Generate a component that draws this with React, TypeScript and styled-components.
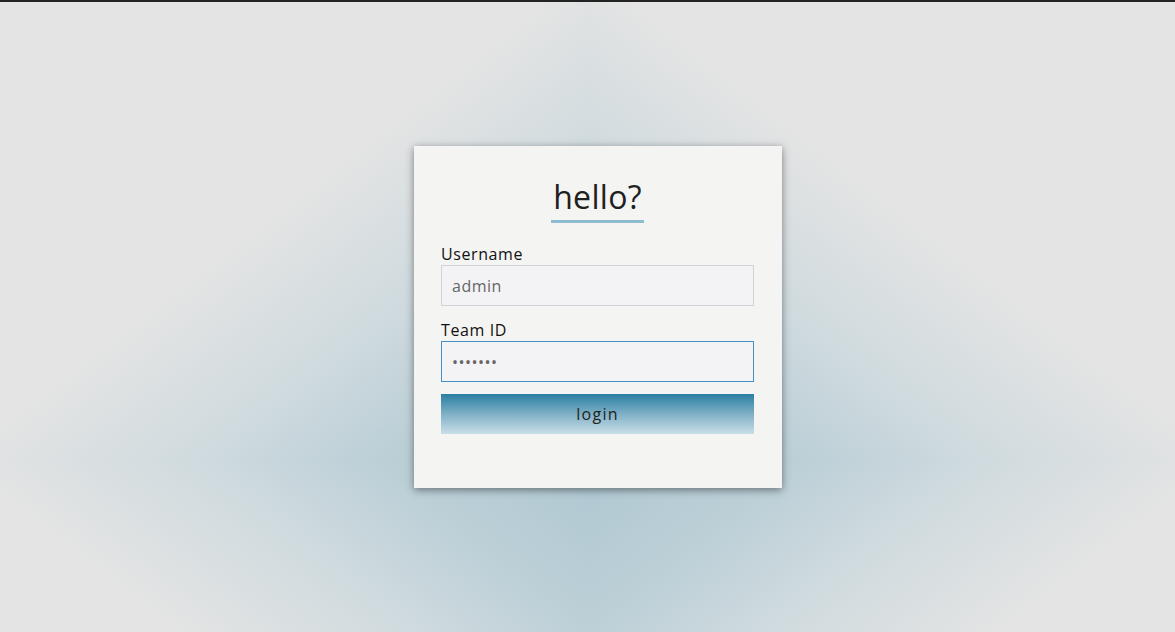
import React from "react";
import styled, { createGlobalStyle } from "styled-components";

const Global = createGlobalStyle`
  html, body { margin: 0; padding: 0; }
  body { font-family: "Open Sans", "Noto Sans", sans-serif; }
  * { box-sizing: border-box; }
`;

const STOPS = "#afc8d2 0%, #bccfd7 18%, #d0dbdf 34%, #e4e4e4 54%";

const Page = styled.main`
  height: 100vh;
  border-top: 2px solid #232323;
  background-color: #e4e4e4;
  background-image:
    linear-gradient(to top left, ${STOPS}),
    linear-gradient(to top right, ${STOPS}),
    linear-gradient(to bottom left, ${STOPS}),
    linear-gradient(to bottom right, ${STOPS});
  background-repeat: no-repeat;
  background-size: 590px 458px, 590px 458px, 590px 460px, 590px 460px;
  background-position: 0 0, 588px 0, 0 458px, 588px 458px;
  display: flex;
  align-items: center;
  justify-content: center;
  padding-left: 21px;
`;

const Card = styled.form`
  width: 368px;
  height: 342px;
  background: #f4f4f2;
  box-shadow: 0 2px 8px rgba(0, 0, 0, 0.45);
  padding: 30px 28px 0 27px;
  display: flex;
  flex-direction: column;
`;

const TitleWrap = styled.div`
  display: flex;
  justify-content: center;
  margin-bottom: 20px;
`;

const Title = styled.h1`
  margin: 0;
  font-size: 32px;
  font-weight: 400;
  line-height: 42px;
  color: #202020;
  letter-spacing: 0.3px;
  padding: 0 2px 2px;
  border-bottom: 3px solid transparent;
  border-image: linear-gradient(to bottom, #2478a3, #5d9dbd 60%, #8fbdd1) 1;
`;

const Field = styled.div`
  display: flex;
  flex-direction: column;
  margin-bottom: 12px;
  & + & { margin-top: 1px; }
`;

const Label = styled.label`
  font-size: 16px;
  line-height: 22px;
  color: #111;
  letter-spacing: 0.6px;
`;

const Input = styled.input<{ $focused?: boolean }>`
  height: 41px;
  width: 100%;
  border: 1px solid ${(p) => (p.$focused ? "#4690c8" : "#d2d2d4")};
  background: #f3f3f5;
  padding: 0 10px;
  font-family: inherit;
  font-size: 16px;
  letter-spacing: 0.5px;
  color: #666;
  outline: none;
`;

const Button = styled.button`
  height: 40px;
  width: 100%;
  border: none;
  background: linear-gradient(to bottom, #2a7ea3 0%, #7fb0c6 50%, #c9dfe7 100%);
  font-family: inherit;
  font-size: 16px;
  letter-spacing: 1.3px;
  color: #222;
  cursor: pointer;
`;

export default function App() {
  return (
    <>
      <Global />
      <Page>
        <Card onSubmit={(e) => e.preventDefault()}>
          <TitleWrap>
            <Title>hello?</Title>
          </TitleWrap>
          <Field>
            <Label htmlFor="u">Username</Label>
            <Input id="u" defaultValue="admin" />
          </Field>
          <Field>
            <Label htmlFor="t">Team ID</Label>
            <Input id="t" type="password" defaultValue="1234567" $focused />
          </Field>
          <Button type="submit">login</Button>
        </Card>
      </Page>
    </>
  );
}
